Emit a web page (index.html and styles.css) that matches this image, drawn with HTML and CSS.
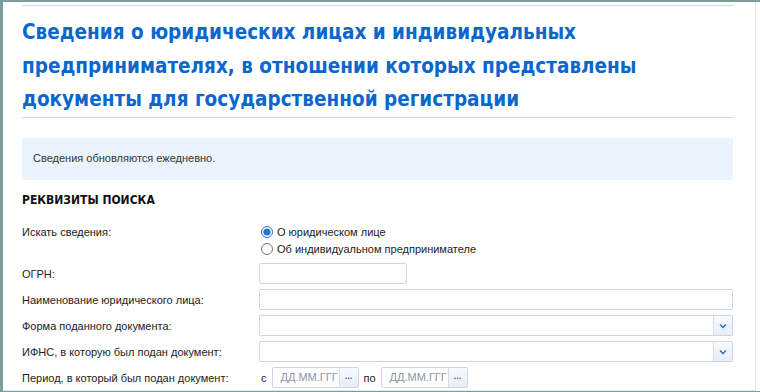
FILE: index.html
```html
<!DOCTYPE html>
<html lang="ru">

<head>
    <meta charset="UTF-8">
    <meta name="viewport" content="width=device-width, initial-scale=1.0">
    <title>Сведения о юридических лицах</title>
    <link rel="stylesheet" href="styles.css">
</head>

<body>
    <main class="frame">
        <div class="page">
            <div class="page__head">
                <h1 class="page__title">Сведения о юридических лицах и индивидуальных предпринимателях, в отношении которых представлены документы для государственной регистрации</h1>
            </div>

            <div class="notice">Сведения обновляются ежедневно.</div>

            <h2 class="section__title">Реквизиты поиска</h2>

            <form class="search">
                <div class="row row--radio">
                    <label class="row__label">Искать сведения:</label>
                    <div class="row__field radios">
                        <label class="radio"><input type="radio" name="kind" checked> О юридическом лице</label>
                        <label class="radio"><input type="radio" name="kind"> Об индивидуальном предпринимателе</label>
                    </div>
                </div>
                <div class="row">
                    <label class="row__label">ОГРН:</label>
                    <div class="row__field"><input class="input input--short" type="text"></div>
                </div>
                <div class="row">
                    <label class="row__label">Наименование юридического лица:</label>
                    <div class="row__field"><input class="input" type="text"></div>
                </div>
                <div class="row">
                    <label class="row__label">Форма поданного документа:</label>
                    <div class="row__field">
                        <div class="select">
                            <span class="select__value"></span>
                            <span class="select__btn"><svg width="8" height="6" viewBox="0 0 8 6"><path d="M1 1.5 L4 4.5 L7 1.5" fill="none" stroke="#2f6fb7" stroke-width="1.5"/></svg></span>
                        </div>
                    </div>
                </div>
                <div class="row">
                    <label class="row__label">ИФНС, в которую был подан документ:</label>
                    <div class="row__field">
                        <div class="select">
                            <span class="select__value"></span>
                            <span class="select__btn"><svg width="8" height="6" viewBox="0 0 8 6"><path d="M1 1.5 L4 4.5 L7 1.5" fill="none" stroke="#2f6fb7" stroke-width="1.5"/></svg></span>
                        </div>
                    </div>
                </div>
                <div class="row">
                    <label class="row__label">Период, в который был подан документ:</label>
                    <div class="row__field period">
                        <span>с</span>
                        <div class="date">
                            <span class="date__value">ДД.ММ.ГГГ</span>
                            <span class="date__btn">...</span>
                        </div>
                        <span>по</span>
                        <div class="date">
                            <span class="date__value">ДД.ММ.ГГГ</span>
                            <span class="date__btn">...</span>
                        </div>
                    </div>
                </div>
            </form>
        </div>
    </main>
</body>

</html>
```

FILE: styles.css
```css
* {
    margin: 0;
    padding: 0;
    box-sizing: border-box;
}

body {
    width: 100%;
    height: 100vh;
    overflow: hidden;
    background-color: #7d9c9c;
    font-family: "Liberation Sans", Arial, sans-serif;
    font-size: 11px;
    color: #222;
}

/* рамка */
.frame {
    height: 100vh;
    padding: 2px 0 1px 3px;
}

.page {
    height: 100%;
    background-color: #fff;
    border-right: 4px solid #fff;
    box-shadow: inset -1px 0 0 #e3e8ec, inset 0 -1px 0 #e3e8ec;
    padding: 3px 23px 0 19px;
}

/* заголовок */
.page__head {
    border-top: 1px solid #cbd7ee;
    border-bottom: 1px solid #cbd7ee;
    height: 113px;
    padding-top: 10px;
}

.page__title {
    max-width: 640px;
    font-family: "DejaVu Sans Condensed", sans-serif;
    font-weight: bold;
    font-size: 20.5px;
    line-height: 33.5px;
    color: #0b67cc;
}

.notice {
    margin-top: 20px;
    height: 42px;
    padding: 14px 11px;
    background-color: #ebf3fd;
    color: #333;
}

.section__title {
    margin: 13px 0 17px;
    font-family: "DejaVu Sans Condensed", sans-serif;
    font-weight: bold;
    font-size: 12px;
    line-height: 15px;
    text-transform: uppercase;
    color: #111;
}

/* форма */
.search {
    display: flex;
    flex-direction: column;
    gap: 5px;
}

.row {
    display: flex;
    align-items: center;
}

.row--radio {
    align-items: flex-start;
    margin-bottom: 2px;
}

.row__label {
    width: 237px;
    flex-shrink: 0;
    line-height: 14px;
}

.row__field {
    flex: 1;
}

.radios {
    display: flex;
    flex-direction: column;
    gap: 3px;
    padding-left: 2px;
}

.radio {
    display: flex;
    align-items: center;
    gap: 4px;
    line-height: 14px;
}

.radio input {
    width: 12px;
    height: 12px;
    accent-color: #2a74d6;
}

.input {
    display: block;
    width: 100%;
    height: 21px;
    border: 1px solid #ccd5e6;
    border-radius: 2px;
    background-color: #fff;
}

.input--short {
    width: 148px;
}

.select {
    display: flex;
    height: 21px;
    border: 1px solid #ccd5e6;
    border-radius: 2px;
}

.select__value {
    flex: 1;
}

.select__btn {
    width: 19px;
    display: flex;
    align-items: center;
    justify-content: center;
    border-left: 1px solid #d7deea;
    background: linear-gradient(#f8fafd, #e8eef7);
}

.period {
    display: flex;
    align-items: center;
    gap: 5px;
    padding-left: 2px;
}

.date {
    display: flex;
    height: 21px;
    border: 1px solid #ccd5e6;
    border-radius: 2px;
}

.date__value {
    width: 66px;
    padding-left: 8px;
    line-height: 19px;
    color: #8b96a8;
}

.date__btn {
    width: 19px;
    border-left: 1px solid #d7deea;
    background: linear-gradient(#f8fafd, #e8eef7);
    color: #2f6fb7;
    font-weight: bold;
    font-size: 9px;
    line-height: 16px;
    text-align: center;
}
```
